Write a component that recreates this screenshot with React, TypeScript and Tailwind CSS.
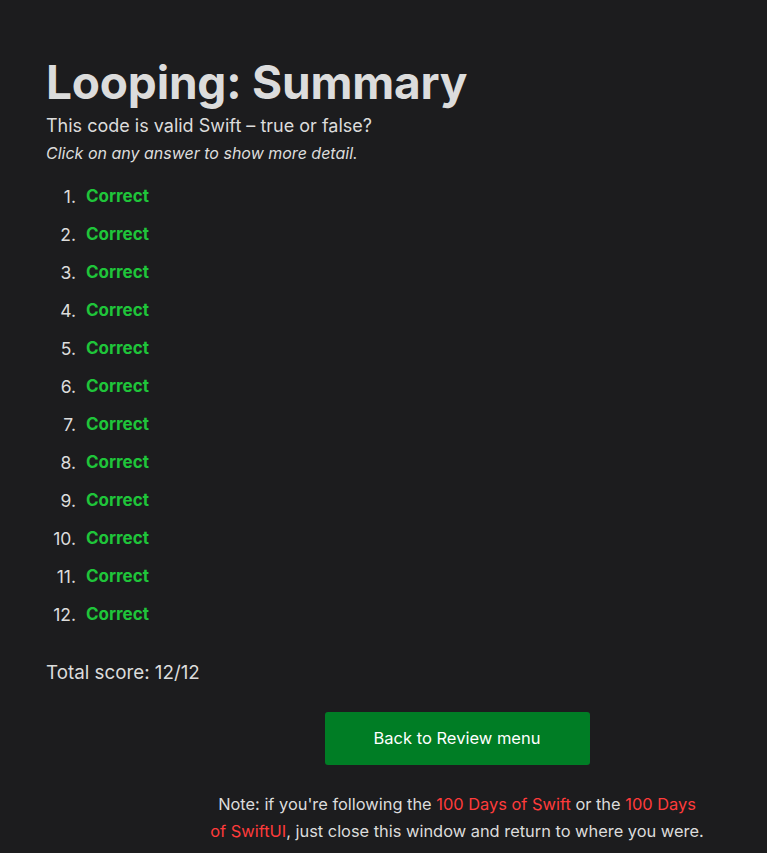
import React from "react";

export default function App() {
  const items = Array.from({ length: 12 }, (_, i) => i + 1);
  return (
    <div className="min-h-[853px] w-full bg-[#1c1c1e] text-[#dcdcdc] font-['Inter',sans-serif]">
      <div className="pl-[46px] pr-[46px] pt-[52px]">
        <h1 className="text-[46px] font-bold leading-[60px] tracking-[-0.2px]">Looping: Summary</h1>
        <p className="text-[18px] leading-[26px] mt-[1px]">This code is valid Swift – true or false?</p>
        <p className="text-[16px] italic leading-[24px] mt-[2px]">Click on any answer to show more detail.</p>
        <ol className="mt-[21px] flex flex-col gap-[16px]">
          {items.map((n) => (
            <li key={n} className="flex items-center h-[22px]">
              <span className="w-[30px] text-right text-[17.5px]">{n}.</span>
              <span className="ml-[10px] text-[17px] font-bold text-[#1fc53a]">Correct</span>
            </li>
          ))}
        </ol>
        <p className="mt-[34px] text-[18.8px] leading-[26px]">Total score: 12/12</p>
        <div className="ml-[156px] w-[510px] flex flex-col items-center">
          <button className="mt-[26px] w-[265px] h-[53px] rounded-[3px] bg-[#007d25] text-white text-[16.5px]">
            Back to Review menu
          </button>
          <p className="mt-[26px] text-center text-[16.4px] leading-[27px]">
            Note: if you're following the <span className="text-[#ff3b3b]">100 Days of Swift</span> or the{" "}
            <span className="text-[#ff3b3b]">100 Days <span className="whitespace-nowrap">of SwiftUI</span></span>, just close this window and return to where you were.
          </p>
        </div>
      </div>
    </div>
  );
}
